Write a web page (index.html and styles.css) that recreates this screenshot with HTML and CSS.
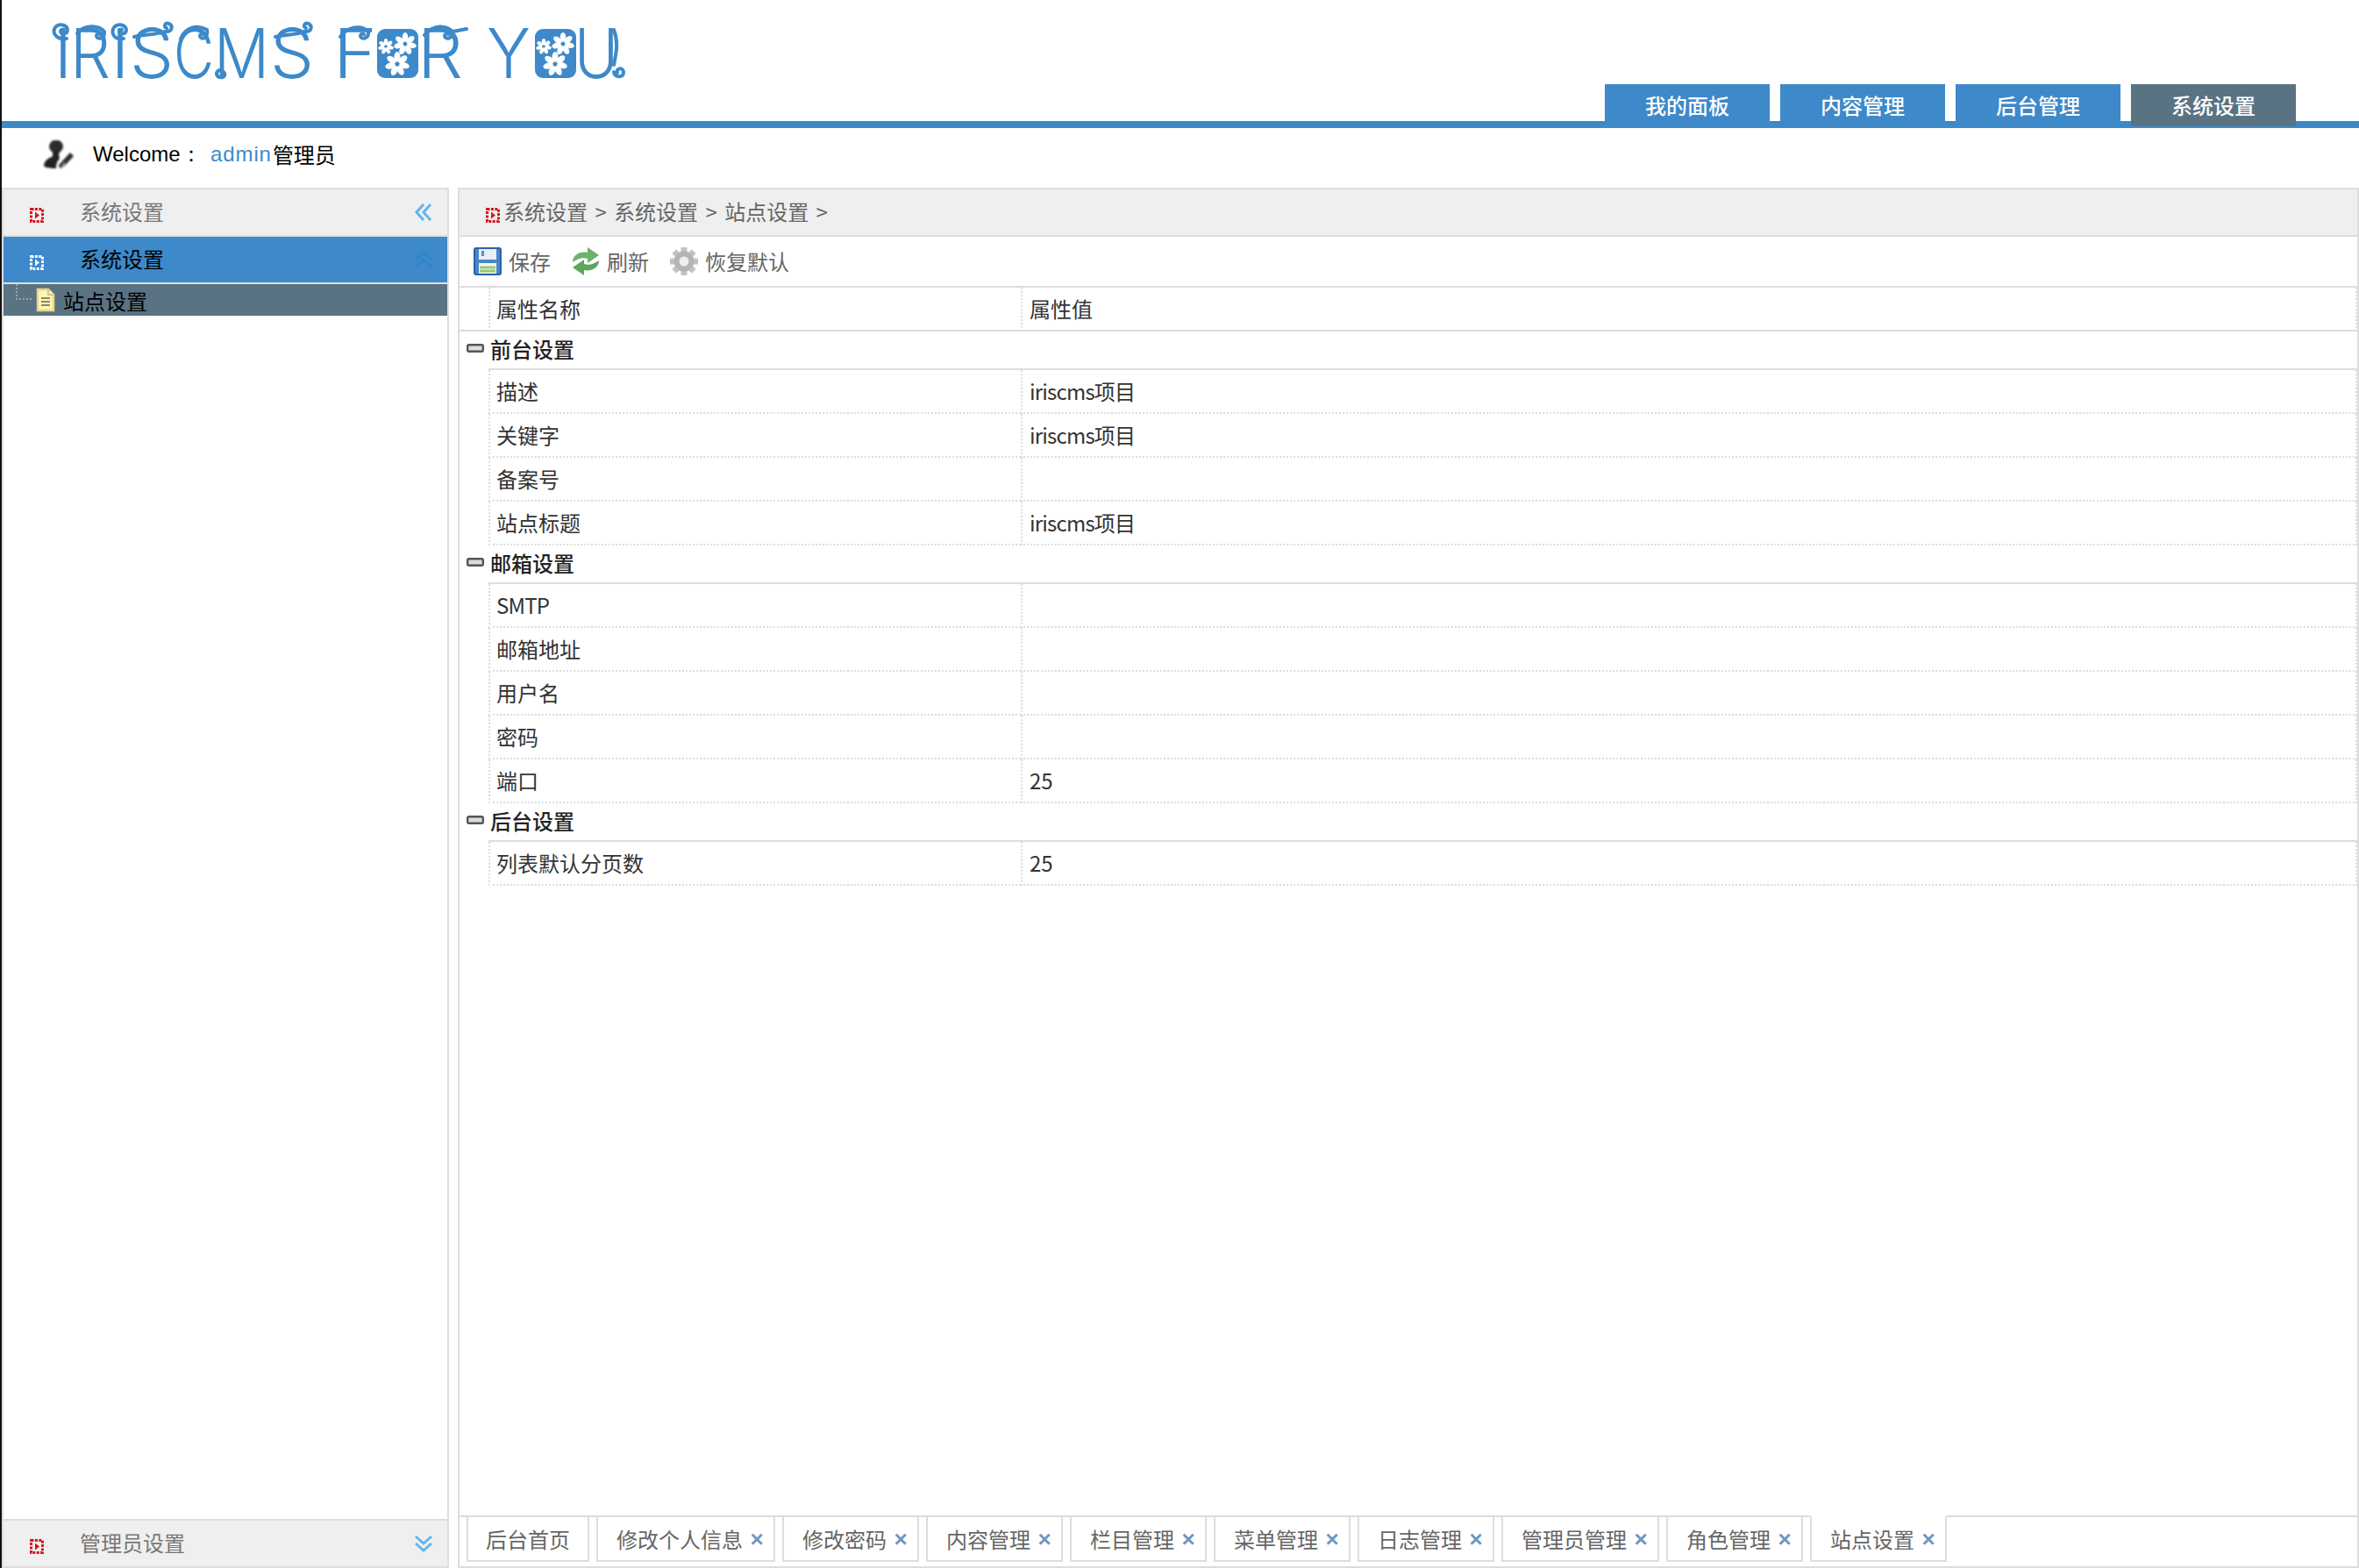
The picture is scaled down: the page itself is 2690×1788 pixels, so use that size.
FILE: index.html
```html
<!DOCTYPE html>
<html lang="zh">
<head>
<meta charset="utf-8">
<title>IRISCMS</title>
<link rel="stylesheet" href="styles.css">
</head>
<body>
<svg class="defs" width="0" height="0" aria-hidden="true">
  <defs>
    <symbol id="flower" viewBox="-12 -12 24 24">
      <g class="petals">
        <ellipse cx="0" cy="-7" rx="3" ry="5"/>
        <ellipse cx="0" cy="-7" rx="3" ry="5" transform="rotate(51)"/>
        <ellipse cx="0" cy="-7" rx="3" ry="5" transform="rotate(102)"/>
        <ellipse cx="0" cy="-7" rx="3" ry="5" transform="rotate(153)"/>
        <ellipse cx="0" cy="-7" rx="3" ry="5" transform="rotate(204)"/>
        <ellipse cx="0" cy="-7" rx="3" ry="5" transform="rotate(255)"/>
        <ellipse cx="0" cy="-7" rx="3" ry="5" transform="rotate(306)"/>
      </g>
    </symbol>
    <symbol id="marker" viewBox="0 0 16 17">
      <rect x="1.5" y="1.5" width="13" height="14" fill="none" stroke="currentColor" stroke-width="3" stroke-dasharray="3 1.4"/>
      <path d="M6 4.5 L11 8.5 L6 12.5 Z" fill="currentColor"/>
    </symbol>
    <symbol id="dbl-left" viewBox="0 0 20 20">
      <path d="M10 1 L2 10 L10 19 M18 1 L10 10 L18 19" fill="none" stroke="currentColor" stroke-width="3"/>
    </symbol>
    <symbol id="dbl-up" viewBox="0 0 22 20">
      <path d="M2 10 L11 2 L20 10 M2 18 L11 10 L20 18" fill="none" stroke="currentColor" stroke-width="3"/>
    </symbol>
    <symbol id="dbl-down" viewBox="0 0 22 20">
      <path d="M2 2 L11 10 L20 2 M2 10 L11 18 L20 10" fill="none" stroke="currentColor" stroke-width="3"/>
    </symbol>
    <symbol id="minus" viewBox="0 0 20 10">
      <rect x="1.2" y="1.2" width="17.6" height="7.6" rx="1.5" fill="#ddd" stroke="#555" stroke-width="2.4"/>
    </symbol>
  </defs>
</svg>

<div class="app">
  <header class="topbar">
    <svg class="logo" viewBox="2 0 720 90" width="720" height="90" role="img" aria-label="IRISCMS FOR YOU">
      <g class="logo-text">
        <text x="72" y="89" text-anchor="middle">I</text>
        <text x="80" y="89" textLength="46" lengthAdjust="spacingAndGlyphs">R</text>
        <text x="137" y="89" text-anchor="middle">I</text>
        <text x="148" y="89" textLength="50" lengthAdjust="spacingAndGlyphs">S</text>
        <text x="198" y="89" textLength="46" lengthAdjust="spacingAndGlyphs">C</text>
        <text x="244" y="89" textLength="63" lengthAdjust="spacingAndGlyphs">M</text>
        <text x="308" y="89" textLength="50" lengthAdjust="spacingAndGlyphs">S</text>
        <text x="380" y="89" textLength="50" lengthAdjust="spacingAndGlyphs">F</text>
        <text x="476" y="89" textLength="52" lengthAdjust="spacingAndGlyphs">R</text>
        <text x="555" y="89" textLength="50" lengthAdjust="spacingAndGlyphs">Y</text>
        <text x="655" y="89" textLength="50" lengthAdjust="spacingAndGlyphs">U</text>
      </g>
      <g class="logo-curl">
        <path d="M76 44 C66 46 60 39 62 33 C65 26 76 27 77 34 C77 39 70 40 69 36 C69 34 71 33 72 34"/>
        <path d="M88 38 C96 28 112 28 119 36 C120 44 111 46 110 41 C110 39 112 38 114 39"/>
        <path d="M141 44 C131 46 127 39 129 33 C132 26 143 27 144 34 C144 39 137 40 136 36 C136 34 138 33 139 34"/>
        <path d="M153 42 C165 39 178 40 188 36 C196 37 198 30 193 27 C188 25 186 31 190 32"/>
        <path d="M206 44 C212 30 226 28 236 34 C238 44 229 46 228 41 C228 39 230 38 232 39"/>
        <path d="M250 80 C244 84 248 89 254 88 C258 86 256 81 253 82"/>
        <path d="M314 42 C326 39 338 40 347 36 C355 37 357 30 352 27 C347 25 345 31 349 32"/>
        <path d="M388 42 C396 30 412 28 420 36 C421 44 412 46 411 41 C411 39 413 38 415 39"/>
        <path d="M484 40 C494 28 508 28 516 36 C517 44 508 46 507 41 C507 39 509 38 511 39 M516 36 L532 33"/>
        <path d="M700 34 C706 50 702 62 700 74 M700 82 C700 89 712 89 711 82 C710 76 702 78 704 83"/>
      </g>
      <rect class="logo-block" x="430" y="33" width="47" height="56" rx="9"/>
      <rect class="logo-block" x="610" y="33" width="47" height="56" rx="9"/>
      <use href="#flower" x="431" y="44" width="18" height="18"/>
      <use href="#flower" x="449" y="37" width="26" height="26"/>
      <use href="#flower" x="439" y="59" width="28" height="28"/>
      <use href="#flower" x="611" y="44" width="18" height="18"/>
      <use href="#flower" x="629" y="37" width="26" height="26"/>
      <use href="#flower" x="619" y="59" width="28" height="28"/>
    </svg>
    <nav class="nav">
      <a class="nav-tab">我的面板</a>
      <a class="nav-tab">内容管理</a>
      <a class="nav-tab">后台管理</a>
      <a class="nav-tab is-active">系统设置</a>
    </nav>
  </header>

  <div class="welcome">
    <svg class="user-icon" viewBox="0 0 36 32" width="36" height="32" aria-hidden="true">
      <ellipse cx="15" cy="7" rx="8" ry="7.5" fill="#2b2b2b"/>
      <path d="M11 12 C11 16 12 17 10 19 C6 20 1 24 1 29 C3 32 10 32 15 32 C15 27 16 24 19 21 C18 18 18 15 19 12 Z" fill="#222"/>
      <path d="M31 14 L35 18 L24 30 L19 32 L18 28 Z" fill="#2f2f2f"/>
      <path d="M24 25 L27 28 L24 30 L20 31 Z" fill="#9a9a9a"/>
    </svg>
    <span class="welcome-label">Welcome：</span><a class="welcome-name">admin</a><span class="welcome-role">管理员</span>
  </div>

  <main class="main">
    <aside class="side">
      <div class="side-head">
        <svg class="marker marker-red"><use href="#marker"/></svg>
        <span class="side-title">系统设置</span>
        <svg class="chev chev-light"><use href="#dbl-left"/></svg>
      </div>
      <div class="side-head side-head-open">
        <svg class="marker marker-white"><use href="#marker"/></svg>
        <span class="side-title">系统设置</span>
        <svg class="chev chev-deep"><use href="#dbl-up"/></svg>
      </div>
      <div class="tree-row">
        <svg class="tree-line" viewBox="0 0 18 18" width="18" height="18" aria-hidden="true"><path d="M1 0 V17 H18"/></svg>
        <svg class="file-icon" viewBox="0 0 23 28" width="23" height="28" aria-hidden="true">
          <path d="M3 2 H15 L21 8 V26 H3 Z" fill="#fdf7b0" stroke="#e9d58e" stroke-width="2.5"/>
          <path d="M15 2 V8 H21" fill="#fffbe0" stroke="#c9b772" stroke-width="1.5"/>
          <path d="M7 12 H17 M7 16 H17 M7 20 H17" stroke="#8a8a70" stroke-width="2"/>
        </svg>
        <span class="tree-label">站点设置</span>
      </div>
      <div class="side-fill"></div>
      <div class="side-head side-head-last">
        <svg class="marker marker-red"><use href="#marker"/></svg>
        <span class="side-title">管理员设置</span>
        <svg class="chev chev-light"><use href="#dbl-down"/></svg>
      </div>
    </aside>

    <section class="content">
      <div class="crumbs">
        <svg class="marker marker-red"><use href="#marker"/></svg>
        <span class="crumb-text">系统设置 &gt; 系统设置 &gt; 站点设置 &gt;</span>
      </div>
      <div class="toolbar">
        <a class="tool">
          <svg viewBox="0 0 32 32" width="32" height="32" aria-hidden="true">
            <rect x="1" y="1" width="30" height="30" rx="2" fill="#4a86c6" stroke="#2a62a8" stroke-width="2"/>
            <rect x="6" y="2" width="20" height="12" fill="#e8eef5"/>
            <rect x="9" y="4" width="3" height="6" fill="#5b8fc8"/>
            <rect x="6" y="18" width="20" height="12" fill="#f2f5ea"/>
            <path d="M7 23 H25 M7 27 H25" stroke="#9cc47e" stroke-width="3"/>
          </svg>
          <span>保存</span>
        </a>
        <a class="tool">
          <svg viewBox="0 0 32 32" width="32" height="32" aria-hidden="true">
            <path d="M1 17 C1 9 9 4 18 6 L18 0 L31 9 L18 18 L18 13 C12 11 7 13 1 17 Z" fill="#6cb36c"/>
            <path d="M31 15 C31 23 23 28 14 26 L14 32 L1 23 L14 14 L14 19 C20 21 25 19 31 15 Z" fill="#5da65d"/>
          </svg>
          <span>刷新</span>
        </a>
        <a class="tool">
          <svg viewBox="0 0 32 32" width="32" height="32" aria-hidden="true">
            <g fill="#c2c2c2">
              <rect x="12.5" y="0" width="7" height="32" rx="1"/>
              <rect x="12.5" y="0" width="7" height="32" rx="1" transform="rotate(45 16 16)"/>
              <rect x="12.5" y="0" width="7" height="32" rx="1" transform="rotate(90 16 16)"/>
              <rect x="12.5" y="0" width="7" height="32" rx="1" transform="rotate(135 16 16)"/>
            </g>
            <circle cx="16" cy="16" r="11.5" fill="#b4b4b4"/>
            <circle cx="16" cy="16" r="5.5" fill="#eee"/>
          </svg>
          <span>恢复默认</span>
        </a>
      </div>

      <table class="props">
        <colgroup><col class="col-gutter"><col class="col-name"><col></colgroup>
        <thead>
          <tr class="head-row"><td></td><td class="cell">属性名称</td><td class="cell">属性值</td></tr>
        </thead>
        <tbody>
          <tr class="group-row"><td class="group-toggle"><svg class="minus"><use href="#minus"/></svg></td><td colspan="2" class="group-name">前台设置</td></tr>
          <tr class="row"><td></td><td class="cell">描述</td><td class="cell tight">iriscms项目</td></tr>
          <tr class="row"><td></td><td class="cell">关键字</td><td class="cell tight">iriscms项目</td></tr>
          <tr class="row"><td></td><td class="cell">备案号</td><td class="cell"></td></tr>
          <tr class="row"><td></td><td class="cell">站点标题</td><td class="cell tight">iriscms项目</td></tr>
          <tr class="group-row"><td class="group-toggle"><svg class="minus"><use href="#minus"/></svg></td><td colspan="2" class="group-name">邮箱设置</td></tr>
          <tr class="row"><td></td><td class="cell tight">SMTP</td><td class="cell"></td></tr>
          <tr class="row"><td></td><td class="cell">邮箱地址</td><td class="cell"></td></tr>
          <tr class="row"><td></td><td class="cell">用户名</td><td class="cell"></td></tr>
          <tr class="row"><td></td><td class="cell">密码</td><td class="cell"></td></tr>
          <tr class="row"><td></td><td class="cell">端口</td><td class="cell">25</td></tr>
          <tr class="group-row"><td class="group-toggle"><svg class="minus"><use href="#minus"/></svg></td><td colspan="2" class="group-name">后台设置</td></tr>
          <tr class="row"><td></td><td class="cell">列表默认分页数</td><td class="cell">25</td></tr>
        </tbody>
      </table>

      <div class="content-fill"></div>

      <div class="tabs">
        <a class="tab">后台首页</a>
        <a class="tab tab-close">修改个人信息<i class="x">×</i></a>
        <a class="tab tab-close">修改密码<i class="x">×</i></a>
        <a class="tab tab-close">内容管理<i class="x">×</i></a>
        <a class="tab tab-close">栏目管理<i class="x">×</i></a>
        <a class="tab tab-close">菜单管理<i class="x">×</i></a>
        <a class="tab tab-close">日志管理<i class="x">×</i></a>
        <a class="tab tab-close">管理员管理<i class="x">×</i></a>
        <a class="tab tab-close">角色管理<i class="x">×</i></a>
        <a class="tab tab-close is-active">站点设置<i class="x">×</i></a>
      </div>
    </section>
  </main>
</div>
</body>
</html>
```
FILE: styles.css
```css
* { box-sizing: border-box; }
html, body { margin: 0; height: 100%; background: #fff; }
body {
  font-family: "Noto Sans CJK SC", "Liberation Sans", sans-serif;
  font-size: 24px;
  color: #333;
  overflow: hidden;
}
.defs { position: absolute; }
.app {
  height: 1788px;
  display: flex;
  flex-direction: column;
  border-left: 2px solid #111;
}

/* top */
.topbar {
  height: 146px;
  flex: none;
  display: flex;
  justify-content: space-between;
  align-items: flex-start;
  border-bottom: 8px solid #3d89c9;
}
.logo { display: block; overflow: visible; filter: blur(.7px); }
.logo-text text {
  font-family: Inter, "Liberation Sans", sans-serif;
  font-size: 78px;
  font-weight: 300;
  fill: #3d89c9;
}
.logo-curl path { fill: none; stroke: #3d89c9; stroke-width: 4; stroke-linecap: round; }
.logo-block { fill: #3d89c9; }
.petals { fill: #fff; }
.nav {
  display: flex;
  gap: 12px;
  padding-top: 96px;
  padding-right: 72px;
}
.nav-tab {
  width: 188px;
  height: 42px;
  background: #3d89c9;
  color: #fff;
  font-weight: 500;
  line-height: 42px;
  padding-top: 3px;
  text-align: center;
}
.nav-tab.is-active { background: #5a7382; height: 48px; }

/* welcome */
.welcome {
  height: 68px;
  flex: none;
  display: flex;
  align-items: center;
  padding-left: 47px;
  padding-bottom: 9px;
  color: #000;
}
.user-icon { margin-right: 21px; filter: blur(.8px); }
.welcome-label { font-family: "Liberation Sans", sans-serif; width: 134px; }
.welcome-name { font-family: "Liberation Sans", sans-serif; color: #3d89c9; letter-spacing: .9px; }
.welcome-role { margin-left: 1px; }

/* layout */
.main { flex: 1; min-height: 0; display: flex; gap: 10px; }

/* sidebar */
.side {
  width: 510px;
  flex: none;
  display: flex;
  flex-direction: column;
  border: 2px solid #ddd;
  border-bottom: 0;
}
.side-head {
  height: 54px;
  flex: none;
  display: flex;
  align-items: center;
  background: #efefef;
  border-bottom: 2px solid #ddd;
  padding-left: 30px;
  color: #777;
}
.side-head-open {
  height: 54px;
  background: #3d89c9;
  color: #000;
}
.side-head-last { height: 56px; border-top: 2px solid #ddd; }
.marker { width: 16px; height: 17px; flex: none; }
.side-head .marker { margin-top: 7px; }
.marker-red { color: #d9141e; }
.marker-white { color: #fff; }
.side-title { margin-left: 41px; flex: 1; padding-bottom: 3px; }
.chev { width: 22px; height: 20px; margin-right: 16px; flex: none; }
.chev-light { color: #62b6ea; }
.chev-deep { color: #2f86cf; }
.tree-row {
  height: 36px;
  flex: none;
  display: flex;
  align-items: center;
  background: #5a7382;
  color: #000;
  padding-left: 14px;
}
.tree-line { align-self: flex-start; fill: none; stroke: #97a6af; stroke-width: 2; stroke-dasharray: 2 2; }
.file-icon { margin-left: 4px; filter: blur(.5px); }
.tree-label { margin-left: 9px; }
.side-fill { flex: 1; }

/* content */
.content {
  flex: 1;
  min-width: 0;
  display: flex;
  flex-direction: column;
  border: 2px solid #ddd;
}
.crumbs {
  height: 54px;
  flex: none;
  display: flex;
  align-items: center;
  background: #efefef;
  border-bottom: 2px solid #ddd;
  padding-left: 30px;
  color: #666;
}
.crumbs .marker { align-self: flex-start; margin-top: 21px; }
.crumb-text { margin-left: 4px; word-spacing: 3px; padding-bottom: 3px; }
.toolbar {
  height: 58px;
  flex: none;
  display: flex;
  align-items: center;
  gap: 24px;
  border-bottom: 2px solid #ddd;
  padding-left: 16px;
}
.tool { display: flex; align-items: center; gap: 8px; color: #666; }
.tool span { padding-bottom: 1px; }
.tool svg { filter: blur(.6px); }

/* table */
.props {
  width: 100%;
  table-layout: fixed;
  border-collapse: separate;
  border-spacing: 0;
  flex: none;
}
.col-gutter { width: 33px; }
.col-name { width: 607px; }
.props td { padding: 0; }
.props .cell {
  border-left: 2px dotted #ddd;
  padding: 0 8px 2px 7px;
}
.props .cell:last-child { border-right: 2px dotted #ddd; padding-left: 8px; }
.tight { letter-spacing: -.8px; }
.head-row td { height: 50px; border-bottom: 2px solid #ddd; }
.row td { height: 50px; }
.row .cell { border-bottom: 2px dotted #ddd; }
.group-row td { height: 44px; }
.props .group-toggle { vertical-align: top; padding: 14px 0 0 8px; }
.props .group-name {
  border-bottom: 2px solid #ddd;
  font-weight: 500;
  color: #222;
  padding: 0 0 3px 2px;
}
.minus { display: block; width: 20px; height: 10px; filter: blur(.4px); }
.content-fill { flex: 1; }

/* bottom tabs */
.tabs {
  height: 58px;
  flex: none;
  display: flex;
  gap: 8px;
  border-top: 2px solid #ddd;
  padding-left: 8px;
  align-items: flex-start;
}
.tab {
  height: 51px;
  border: 2px solid #ddd;
  border-top: 0;
  padding: 0 20px;
  color: #666;
  display: flex;
  align-items: center;
}
.tab-close { padding-right: 11px; padding-left: 21px; }
.tab.is-active {
  height: 53px;
  margin-top: -2px;
  border-top: 2px solid #fff;
  border-radius: 2px 2px 0 0;
}
.x {
  width: 16px;
  margin-left: 8px;
  text-align: center;
  color: #6f96c6;
  font-style: normal;
  font-weight: 700;
  font-family: "Liberation Sans", sans-serif;
  font-size: 26px;
  line-height: 1;
}
```
